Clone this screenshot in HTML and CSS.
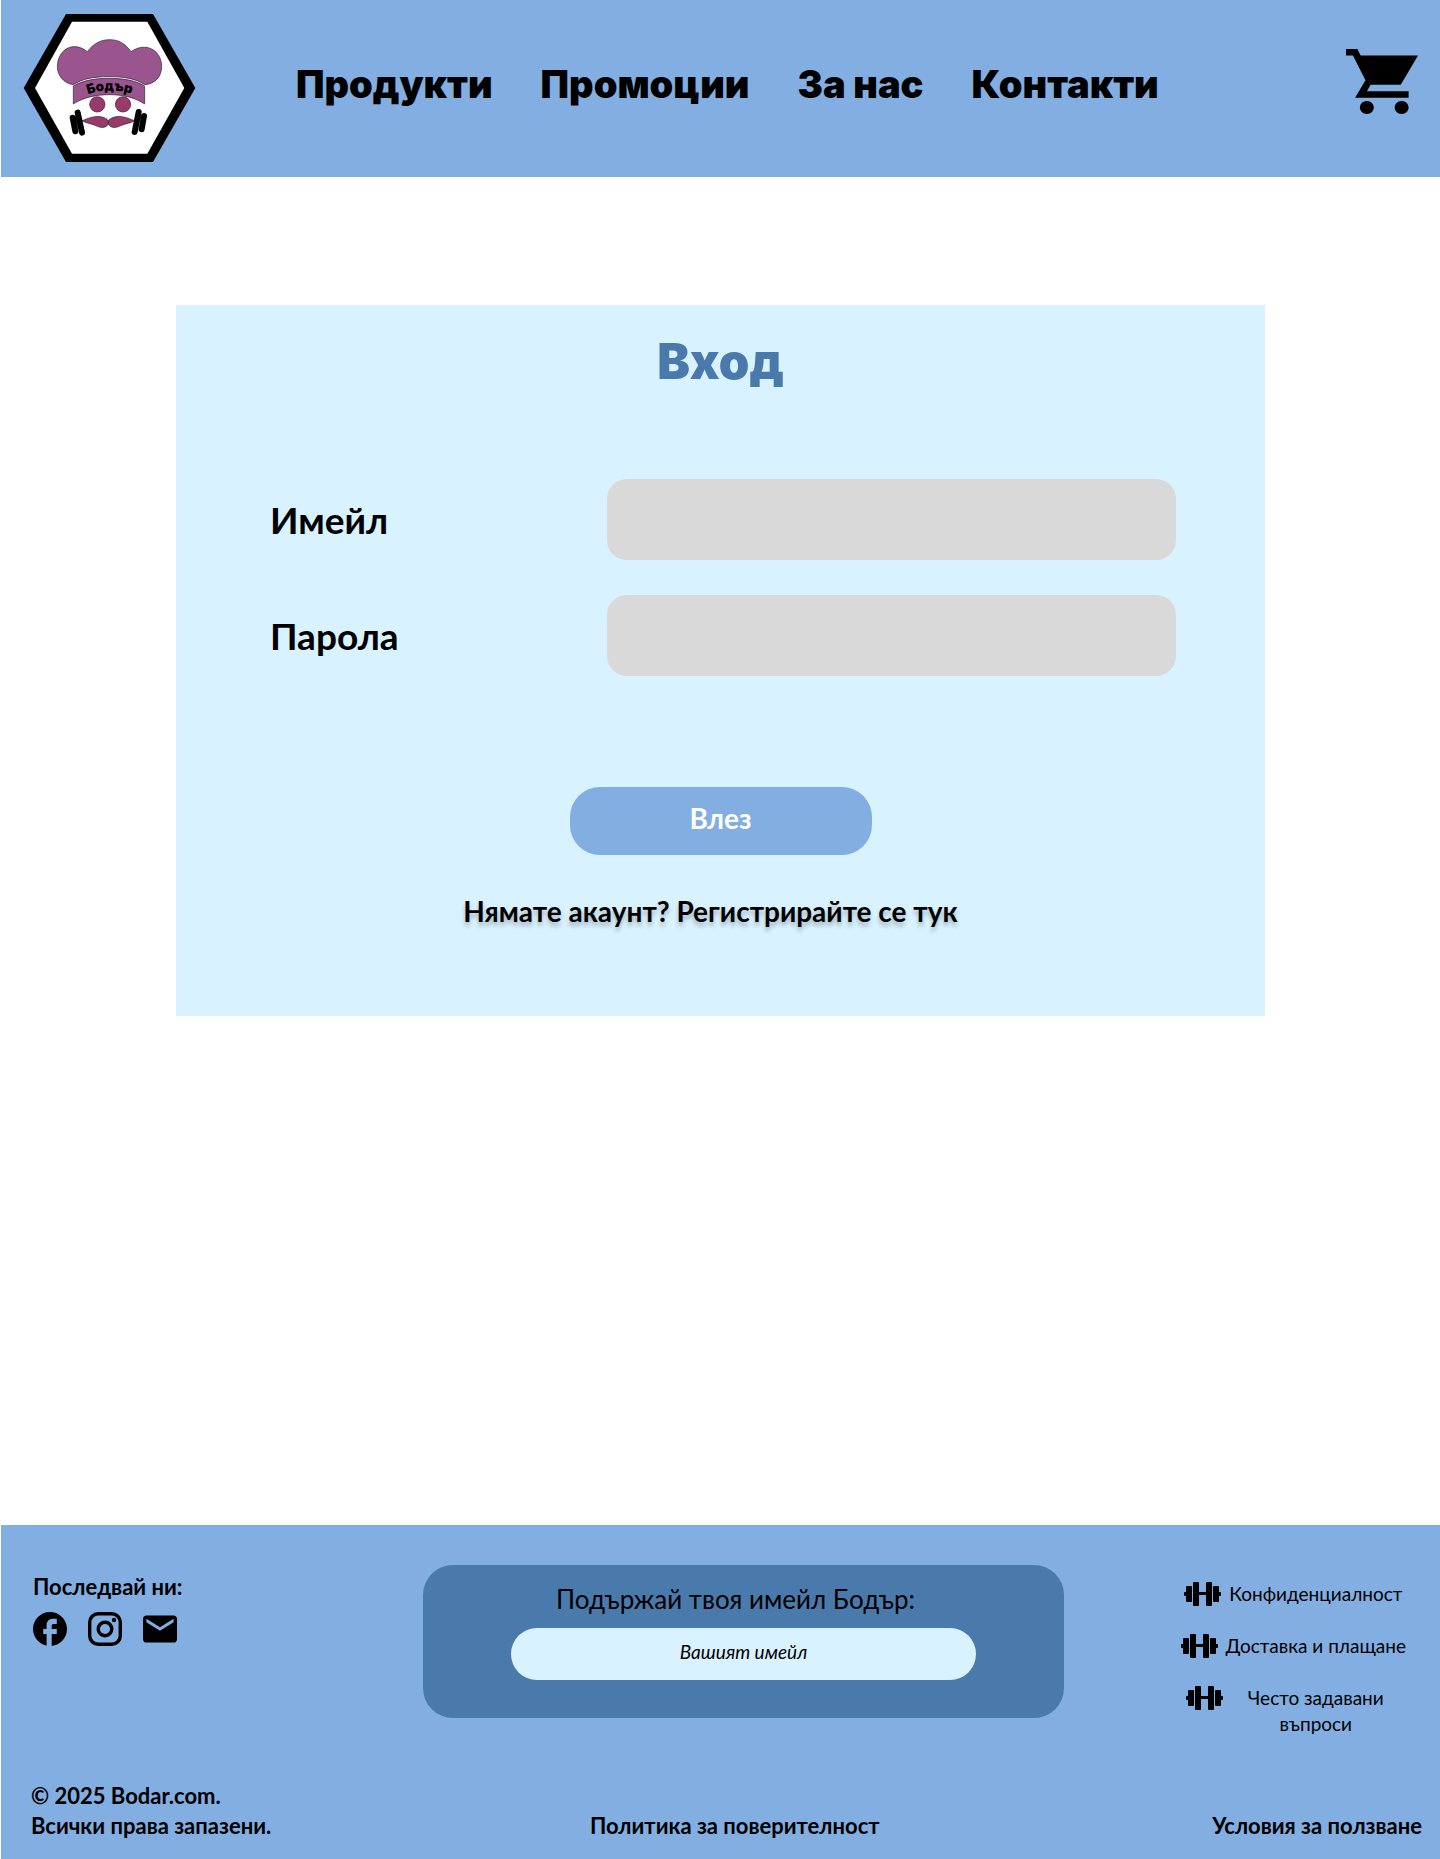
FILE: index.html
```
<!DOCTYPE html>
<html lang="bg">
<head>
<meta charset="utf-8">
<meta name="viewport" content="width=device-width, initial-scale=1">
<title>Бодър – Вход</title>
<link rel="stylesheet" href="styles.css">
</head>
<body>
<svg class="sprite" aria-hidden="true">
  <symbol id="dumbbell" viewBox="0 0 37 24">
    <rect x="0" y="10" width="3" height="4" rx="1"/>
    <rect x="2" y="4" width="6" height="16" rx="1"/>
    <rect x="9" y="0" width="6" height="24" rx="1"/>
    <rect x="14" y="10" width="9" height="3"/>
    <rect x="22" y="0" width="6" height="24" rx="1"/>
    <rect x="29" y="4" width="6" height="16" rx="1"/>
    <rect x="34" y="10" width="3" height="4" rx="1"/>
  </symbol>
</svg>

<header class="header">
  <a class="logo" href="#" aria-label="Бодър">
    <svg viewBox="69 42 519 444" width="173" height="148">
      <path d="M71 264 198 42H459L586 264 459 486H198Z"/>
      <path fill="#fff" d="M105 264 216 65H442L553 264 442 461H216Z"/>
      <g fill="#9a558f" stroke="#2b2030" stroke-width="2">
        <path d="M220 254C190 250 172 225 172 200C173 150 218 120 262 155C282 128 305 119 329 119C355 119 376 130 393 155C437 124 485 150 485 200C485 230 465 252 434 254C405 235 370 230 327 230C282 230 248 236 220 254Z"/>
        <path d="M220 258C250 240 290 235 327 235C365 235 405 240 434 258V312C400 290 365 284 327 284C290 284 250 292 220 312Z"/>
      </g>
      <path id="arc" fill="none" d="M264 283Q330 259 412 286"/>
      <text class="logo-text"><textPath href="#arc">Бодър</textPath></text>
      <g fill="#983a6b" stroke="#2b2030" stroke-width="2">
        <circle cx="292" cy="313" r="23"/>
        <circle cx="369" cy="313" r="23"/>
        <path d="M325 362C318 352 300 348 285 350C268 352 258 358 246 362C258 370 272 370 285 376C300 384 318 386 325 372Z"/>
        <path d="M325 362C332 352 350 348 365 350C382 352 392 358 404 362C392 370 378 370 365 376C350 384 332 386 325 372Z"/>
      </g>
      <g stroke="#000" stroke-width="18" stroke-linecap="round">
        <path d="M218 353 226 394M233 338 246 398M416 336 404 396M432 348 425 388"/>
      </g>
    </svg>
  </a>
  <nav class="nav">
    <a href="#">Продукти</a>
    <a href="#">Промоции</a>
    <a href="#">За нас</a>
    <a href="#">Контакти</a>
  </nav>
  <a class="cart" href="#" aria-label="Количка">
    <svg viewBox="1 2 20.7 20" width="72" height="65" preserveAspectRatio="none"><path d="M7 18c-1.1 0-2 .9-2 2s.9 2 2 2 2-.9 2-2-.9-2-2-2zM1 2v2h2l3.6 7.59L3.62 17H19v-2H7l1.1-2h8.64l4.97-9H5.21l-.94-2H1zm16 16c-1.1 0-2 .9-2 2s.9 2 2 2 2-.9 2-2-.9-2-2-2z"/></svg>
  </a>
</header>

<main class="main">
  <form class="card">
    <h1 class="card-title">Вход</h1>
    <div class="fields">
      <label for="email">Имейл</label>
      <input id="email" type="email">
      <label for="password">Парола</label>
      <input id="password" type="password">
    </div>
    <button class="submit" type="submit">Влез</button>
    <a class="register" href="#">Нямате акаунт? Регистрирайте се тук</a>
  </form>
</main>

<footer class="footer">
  <div class="footer-top">
    <section class="follow">
      <h2>Последвай ни:</h2>
      <div class="social">
        <a href="#" aria-label="Facebook"><svg viewBox="2 2 20 20"><path d="M22 12c0-5.52-4.48-10-10-10S2 6.48 2 12c0 4.84 3.44 8.87 8 9.8V15H8v-3h2V9.5C10 7.57 11.57 6 13.5 6H16v3h-2c-.55 0-1 .45-1 1v2h3v3h-3v6.95c5.05-.5 9-4.76 9-9.95z"/></svg></a>
        <a href="#" aria-label="Instagram"><svg viewBox="2 2 20 20"><rect x="3" y="3" width="18" height="18" rx="5" fill="none" stroke="#000" stroke-width="2"/><circle cx="12" cy="12" r="4" fill="none" stroke="#000" stroke-width="2"/><circle cx="17.3" cy="6.7" r="1.3"/></svg></a>
        <a href="#" aria-label="Имейл"><svg viewBox="2 2 20 20"><path d="M20 4H4c-1.1 0-2 .9-2 2v12c0 1.1.9 2 2 2h16c1.1 0 2-.9 2-2V6c0-1.1-.9-2-2-2zm0 4-8 5-8-5V6l8 5 8-5v2z"/></svg></a>
      </div>
    </section>
    <form class="newsletter">
      <label for="newsletter">Подържай твоя имейл Бодър:</label>
      <input id="newsletter" type="email" placeholder="Вашият имейл">
    </form>
    <ul class="links">
      <li><svg><use href="#dumbbell"/></svg><a href="#">Конфиденциалност</a></li>
      <li><svg><use href="#dumbbell"/></svg><a href="#">Доставка и плащане</a></li>
      <li><svg><use href="#dumbbell"/></svg><a href="#">Често задавани<br>въпроси</a></li>
    </ul>
  </div>
  <div class="footer-bottom">
    <p>© 2025 Bodar.com.<br>Всички права запазени.</p>
    <a class="policy" href="#">Политика за поверителност</a>
    <a href="#">Условия за ползване</a>
  </div>
</footer>
</body>
</html>
```
FILE: styles.css
```
* {
  box-sizing: border-box;
}

body {
  display: flex;
  flex-direction: column;
  min-height: 100vh;
  margin: 0;
  padding-left: 1px;
  background: #fff;
  color: #000;
  font-family: Lato, Roboto, sans-serif;
}

h1, h2, p, ul {
  margin: 0;
  padding: 0;
}

a {
  color: inherit;
  text-decoration: none;
}

svg {
  display: block;
}

input, button {
  border: 0;
  font-family: inherit;
}

.sprite {
  position: absolute;
  width: 0;
  height: 0;
}

/* Header */
.header {
  display: flex;
  align-items: center;
  min-height: 177px;
  padding: 13px 22px 15px;
  background: #82aee1;
}

.logo-text {
  font: 900 40px Inter, sans-serif;
}

.nav {
  display: flex;
  flex-wrap: wrap;
  gap: 48px;
  margin-left: 100px;
  padding-bottom: 8px;
  font: 900 38px/48px Inter, sans-serif;
}

.cart {
  margin-left: auto;
  padding-bottom: 12px;
}

/* Login card */
.main {
  flex: 1;
  padding: 128px 175px;
}

.card {
  display: flex;
  flex-direction: column;
  align-items: center;
  padding: 27px 0 85px;
  background: #d9f2ff;
}

.card-title {
  color: #4a7aab;
  font: 900 49px/60px Inter, sans-serif;
}

.fields {
  display: grid;
  grid-template-columns: 337px minmax(0, 1fr);
  gap: 35px 0;
  align-items: center;
  align-self: stretch;
  margin-top: 87px;
  padding: 0 89px 0 94px;
  font-size: 37px;
  font-weight: 700;
}

.fields input {
  width: 100%;
  height: 81px;
  padding: 0 24px;
  border-radius: 20px;
  background: #d9d9d9;
  font-size: 28px;
}

.submit {
  width: 302px;
  height: 68px;
  margin-top: 111px;
  padding: 0 0 6px;
  border-radius: 30px;
  background: #82aee1;
  color: #fff;
  font-size: 28px;
  font-weight: 700;
}

.register {
  margin: 36px 20px 0 0;
  font-size: 28px;
  font-weight: 700;
  line-height: 40px;
  text-shadow: 0 4px 4px rgba(0, 0, 0, 0.25);
}

/* Footer */
.footer {
  padding: 40px 18px 18px 30px;
  background: #82aee1;
}

.footer-top {
  display: grid;
  grid-template-columns: 392px minmax(0, 1fr) 358px;
  align-items: start;
}

.follow {
  padding: 6px 0 0 2px;
}

.follow h2 {
  font-size: 22px;
  line-height: 32px;
}

.social {
  display: flex;
  gap: 21px;
  margin-top: 9px;
}

.social svg {
  width: 34px;
  height: 34px;
}

.newsletter {
  display: flex;
  flex-direction: column;
  align-items: center;
  padding: 16px 88px 38px;
  border-radius: 30px;
  background: #4a7aab;
}

.newsletter label {
  padding-right: 16px;
  font-size: 26px;
  line-height: 36px;
}

.newsletter input {
  width: 100%;
  height: 52px;
  margin-top: 11px;
  padding: 0 24px 6px;
  border-radius: 26px;
  background: #d9f2ff;
  font-size: 19px;
  font-style: italic;
  text-align: center;
}

.newsletter input::placeholder {
  color: #000;
  opacity: 1;
}

.links {
  display: flex;
  flex-direction: column;
  gap: 26px;
  align-items: center;
  justify-self: end;
  padding: 16px 16px 0 0;
  list-style: none;
  font-size: 19px;
  line-height: 26px;
  text-align: center;
}

.links li {
  display: flex;
  gap: 8px;
}

.links a {
  min-width: 169px;
}

.links svg {
  flex: none;
  width: 37px;
  height: 24px;
  margin-top: 1px;
}

.footer-bottom {
  display: flex;
  align-items: flex-end;
  justify-content: space-between;
  margin-top: 44px;
  font-size: 22px;
  font-weight: 700;
  line-height: 30px;
}

.policy {
  padding-right: 14px;
}
```
